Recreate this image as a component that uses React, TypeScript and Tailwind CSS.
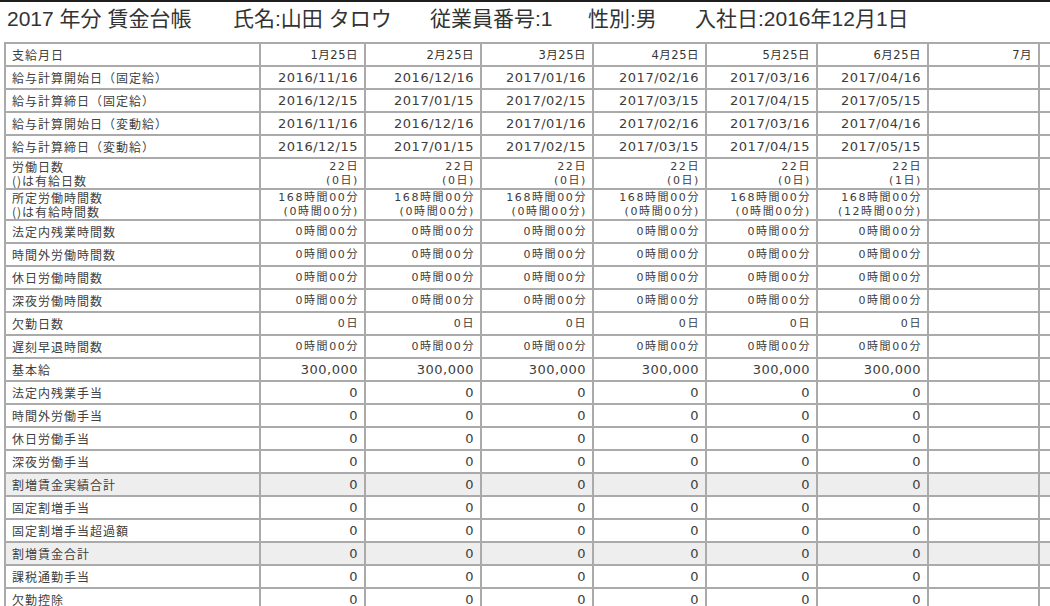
import React from "react";

type Cell = string | [string, string];
type Kind = "head" | "date" | "num" | "jp";
interface Row {
  label: Cell;
  values: Cell[];
  kind: Kind;
  shaded?: boolean;
  tall?: boolean;
}

const colWidths = [105, 116, 112, 113, 111, 111, 111, 111, 111];

const d1 = ["2016/11/16", "2016/12/16", "2017/01/16", "2017/02/16", "2017/03/16", "2017/04/16"];
const d2 = ["2016/12/15", "2017/01/15", "2017/02/15", "2017/03/15", "2017/04/15", "2017/05/15"];
const six = (v: string) => [v, v, v, v, v, v];

const rows: Row[] = [
  { label: "支給月日", values: ["1月25日", "2月25日", "3月25日", "4月25日", "5月25日", "6月25日", "7月"], kind: "head" },
  { label: "給与計算開始日（固定給）", values: d1, kind: "date" },
  { label: "給与計算締日（固定給）", values: d2, kind: "date" },
  { label: "給与計算開始日（変動給）", values: d1, kind: "date" },
  { label: "給与計算締日（変動給）", values: d2, kind: "date" },
  {
    label: ["労働日数", "()は有給日数"],
    values: [
      ["22日", "(0日)"],
      ["22日", "(0日)"],
      ["22日", "(0日)"],
      ["22日", "(0日)"],
      ["22日", "(0日)"],
      ["22日", "(1日)"],
    ],
    kind: "jp",
    tall: true,
  },
  {
    label: ["所定労働時間数", "()は有給時間数"],
    values: [
      ["168時間00分", "(0時間00分)"],
      ["168時間00分", "(0時間00分)"],
      ["168時間00分", "(0時間00分)"],
      ["168時間00分", "(0時間00分)"],
      ["168時間00分", "(0時間00分)"],
      ["168時間00分", "(12時間00分)"],
    ],
    kind: "jp",
    tall: true,
  },
  { label: "法定内残業時間数", values: six("0時間00分"), kind: "jp" },
  { label: "時間外労働時間数", values: six("0時間00分"), kind: "jp" },
  { label: "休日労働時間数", values: six("0時間00分"), kind: "jp" },
  { label: "深夜労働時間数", values: six("0時間00分"), kind: "jp" },
  { label: "欠勤日数", values: six("0日"), kind: "jp" },
  { label: "遅刻早退時間数", values: six("0時間00分"), kind: "jp" },
  { label: "基本給", values: six("300,000"), kind: "num" },
  { label: "法定内残業手当", values: six("0"), kind: "num" },
  { label: "時間外労働手当", values: six("0"), kind: "num" },
  { label: "休日労働手当", values: six("0"), kind: "num" },
  { label: "深夜労働手当", values: six("0"), kind: "num" },
  { label: "割増賃金実績合計", values: six("0"), kind: "num", shaded: true },
  { label: "固定割増手当", values: six("0"), kind: "num" },
  { label: "固定割増手当超過額", values: six("0"), kind: "num" },
  { label: "割増賃金合計", values: six("0"), kind: "num", shaded: true },
  { label: "課税通勤手当", values: six("0"), kind: "num" },
  { label: "欠勤控除", values: six("0"), kind: "num" },
];

const kindClass: Record<Kind, string> = {
  head: "text-[11.5px] tracking-[0.5px] pr-[6px] text-[#333]",
  date: "text-[13px] tracking-[0.5px] pr-[6px]",
  num: "text-[13px] tracking-[0.5px] pr-[6px]",
  jp: "text-[11px] tracking-[1.6px] pr-[5px]",
};

function CellText({ v }: { v: Cell }) {
  if (Array.isArray(v)) {
    return (
      <div className="flex flex-col leading-[14px]">
        <span>{v[0]}</span>
        <span>{v[1]}</span>
      </div>
    );
  }
  return <span className="leading-[14px]">{v}</span>;
}

export default function App() {
  return (
    <div className="w-[1050px] h-[606px] overflow-hidden bg-white border-t-2 border-[#1e1e1e] font-['DejaVu_Sans','Noto_Sans_CJK_JP',sans-serif] text-[#3c3c3c]">
      <div className="h-[40px] flex items-center pl-[7px] pb-[6px] text-[21px] text-[#333] font-['Liberation_Sans','Noto_Sans_CJK_JP',sans-serif] whitespace-nowrap">
        <span className="w-[226px]">2017 年分 賃金台帳</span>
        <span className="w-[197px]">氏名:山田 タロウ</span>
        <span className="w-[158px]">従業員番号:1</span>
        <span className="w-[107px]">性別:男</span>
        <span>入社日:2016年12月1日</span>
      </div>
      <div className="ml-[4px] w-max border-l-2 border-t-2 border-[#aaaaaa]">
        {rows.map((r, i) => (
          <div
            key={i}
            className={`flex border-b-2 border-[#aaaaaa] ${r.tall ? "h-[31px]" : "h-[23px]"} ${r.shaded ? "bg-[#eeeeee]" : "bg-white"}`}
          >
            <div className="w-[255px] shrink-0 border-r-2 border-[#aaaaaa] flex items-center pl-[6px] text-[12px] tracking-[1px] font-['Noto_Sans_CJK_JP',sans-serif] text-[#404040]">
              <CellText v={r.label} />
            </div>
            {colWidths.map((w, j) => {
              const v = r.values[j];
              return (
                <div
                  key={j}
                  style={{ width: w }}
                  className={`shrink-0 border-r-2 border-[#aaaaaa] flex items-center justify-end text-right ${kindClass[r.kind]}`}
                >
                  {v !== undefined ? <CellText v={v} /> : null}
                </div>
              );
            })}
          </div>
        ))}
      </div>
    </div>
  );
}
